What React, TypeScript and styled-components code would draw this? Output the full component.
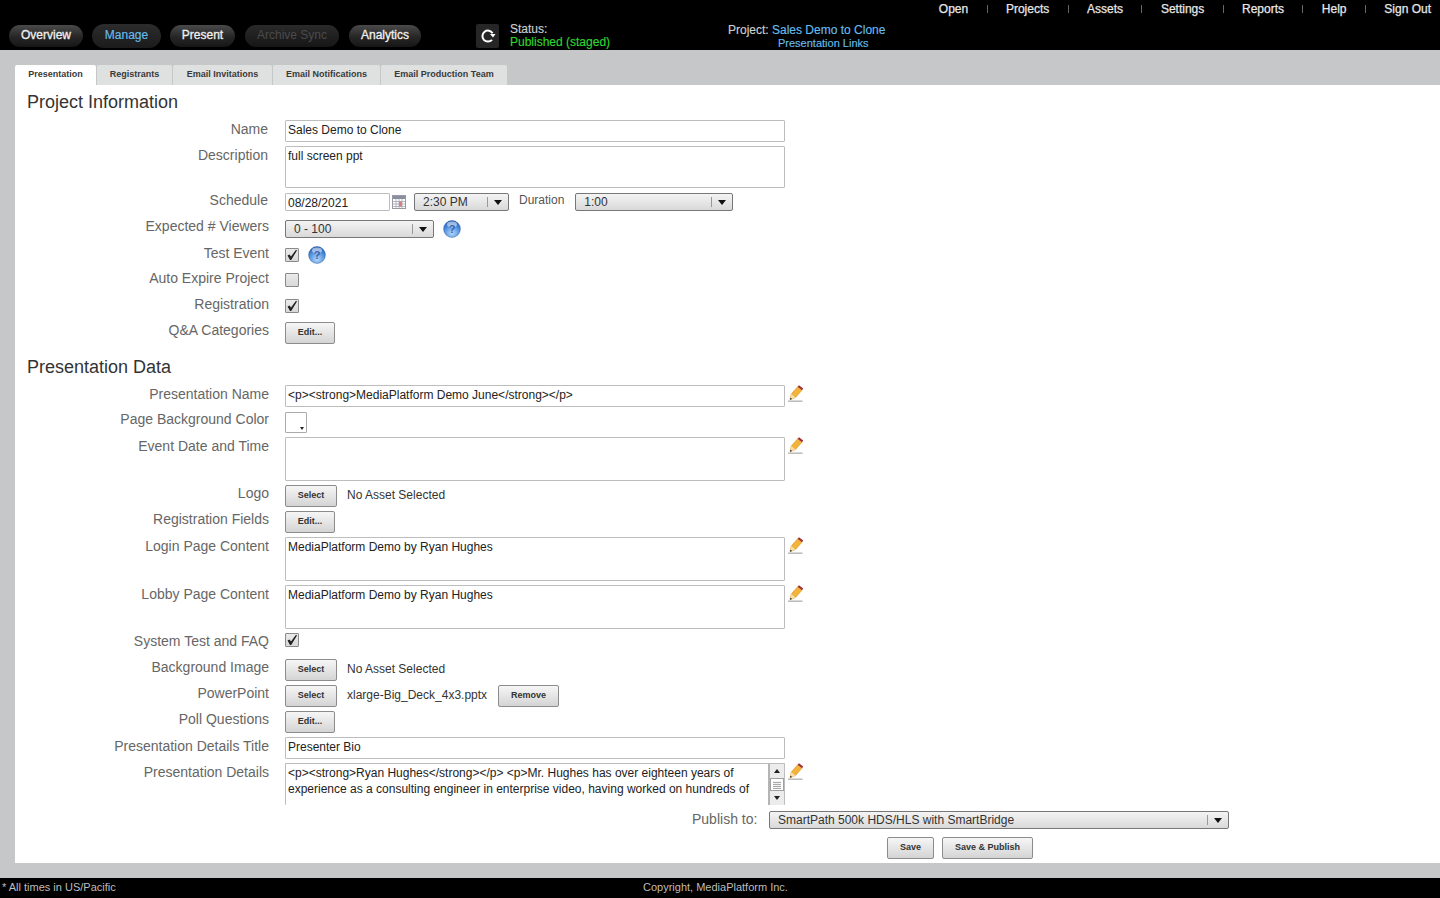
import React from 'react';
import styled, { createGlobalStyle, css } from 'styled-components';

const Global = createGlobalStyle`
  html, body { margin: 0; padding: 0; background: #000; }
  body { font-family: "Liberation Sans", Arial, sans-serif; }
  * { box-sizing: border-box; }
`;

const Page = styled.div`
  width: 1440px;
  height: 898px;
  display: flex;
  flex-direction: column;
  overflow: hidden;
  background: #c6c7c8;
`;

const Header = styled.header`
  height: 50px;
  background: #000;
  flex: none;
  display: flex;
  flex-direction: column;
`;

const TopLinks = styled.nav`
  height: 24px;
  display: flex;
  justify-content: flex-end;
  align-items: flex-start;
  padding: 2px 9px 0 0;
  gap: 18.4px;
  font-size: 12px;
  line-height: 15px;
  color: #e8e8e8;
  -webkit-text-stroke: 0.25px #e8e8e8;
`;

const Sep = styled.span`
  width: 1px;
  height: 8px;
  margin-top: 3px;
  background: #666;
`;

const MainBar = styled.div`
  height: 26px;
  display: flex;
  align-items: flex-start;
  padding-left: 9px;
`;

const Pills = styled.div`
  display: flex;
  width: 467px;
  flex: none;
  padding-top: 1px;
`;

const Pill = styled.a<{ $w: number; $gap: number; $active?: boolean; $off?: boolean }>`
  width: ${p => p.$w}px;
  margin-right: ${p => p.$gap}px;
  height: 22px;
  padding-bottom: 2px;
  border-radius: 11px;
  background: linear-gradient(#4a4a4a, #262626 55%, #161616);
  color: #f0f0f0;
  font-size: 12px;
  -webkit-text-stroke: 0.3px currentColor;
  display: flex;
  align-items: center;
  justify-content: center;
  ${p => p.$active && css`
    height: 24px;
    margin-top: -1px;
    border-radius: 12px;
    background: linear-gradient(#2c2c2c, #1b1b1b);
    color: #66bbec;
    -webkit-text-stroke: 0.15px currentColor;
  `}
  ${p => p.$off && css`
    background: linear-gradient(#2a2a2a, #161616);
    color: #4a4a4a;
    -webkit-text-stroke: 0;
  `}
`;

const Refresh = styled.div`
  width: 23px;
  height: 24px;
  flex: none;
  border-radius: 2px;
  background: #262626;
  display: flex;
  align-items: center;
  justify-content: center;
`;

const Status = styled.div`
  margin-left: 11px;
  margin-top: -1px;
  width: 218px;
  flex: none;
  font-size: 12px;
  line-height: 13px;
  color: #cfcfcf;
  -webkit-text-stroke: 0.15px currentColor;
`;

const Green = styled.div`
  color: #2fd52f;
`;

const ProjectBox = styled.div`
  width: 159px;
  flex: none;
  font-size: 12px;
  line-height: 13px;
  color: #cfcfcf;
  white-space: nowrap;
  -webkit-text-stroke: 0.15px currentColor;
`;

const Blue = styled.span`
  color: #66bbec;
`;

const SubLink = styled.div`
  padding-left: 50px;
  font-size: 11px;
  line-height: 13px;
  color: #66bbec;
`;

const Body = styled.main`
  flex: 1;
  padding: 15px 0 15px 15px;
  display: flex;
  flex-direction: column;
`;

const Tabs = styled.div`
  display: flex;
  gap: 1px;
  height: 20px;
  flex: none;
`;

const Tab = styled.div<{ $w: number; $active?: boolean }>`
  width: ${p => p.$w}px;
  background: ${p => (p.$active ? '#fff' : '#dfe0e0')};
  border-radius: 2px 2px 0 0;
  display: flex;
  align-items: center;
  justify-content: center;
  font-size: 9px;
  font-weight: 700;
  color: #3a3a3a;
  padding-bottom: ${p => (p.$active ? 2 : 3)}px;
`;

const Panel = styled.section`
  flex: 1;
  background: #fff;
  display: flex;
  flex-direction: column;
`;

const SectionTitle = styled.h2<{ $h: number }>`
  margin: 0;
  height: ${p => p.$h}px;
  padding: 7px 0 0 12px;
  font-size: 18px;
  line-height: 20px;
  font-weight: 400;
  color: #333;
`;

const Row = styled.div<{ $h: number }>`
  height: ${p => p.$h}px;
  display: flex;
  align-items: flex-start;
  flex: none;
`;

const Label = styled.label<{ $top?: number; $inset?: boolean }>`
  width: 254px;
  flex: none;
  margin: ${p => p.$top ?? 2}px 16px 0 0;
  padding-right: ${p => (p.$inset ? 1 : 0)}px;
  text-align: right;
  font-size: 14px;
  line-height: 14px;
  color: #666;
`;

const Controls = styled.div<{ $top?: number }>`
  display: flex;
  align-items: flex-start;
  padding-top: ${p => p.$top ?? 0}px;
`;

const TextInput = styled.input`
  width: 500px;
  height: 22px;
  padding: 0 2px 2px;
  border: 1px solid #bdbdbd;
  border-radius: 1px;
  font: 12px "Liberation Sans", Arial, sans-serif;
  color: #222;
  background: #fff;
  outline: none;
`;

const TextArea = styled.textarea<{ $h: number }>`
  width: 500px;
  height: ${p => p.$h}px;
  padding: 2px 2px;
  border: 1px solid #bdbdbd;
  border-radius: 1px;
  font: 12px/15px "Liberation Sans", Arial, sans-serif;
  color: #222;
  resize: none;
  outline: none;
  display: block;
`;

const DateInput = styled(TextInput)`
  width: 105px;
  height: 18px;
  padding: 1px 2px 0;
`;

const Select = styled.div<{ $w: number; $ml?: number }>`
  width: ${p => p.$w}px;
  margin-left: ${p => p.$ml ?? 0}px;
  height: 18px;
  border: 1px solid #777;
  border-radius: 2px;
  background: linear-gradient(#f4f4f4, #d9d9d9);
  display: flex;
  align-items: center;
  padding-left: 8px;
  font-size: 12px;
  color: #333;
`;

const SelectText = styled.span`
  flex: 1;
`;

const Caret = styled.span`
  width: 21px;
  height: 10px;
  padding-right: 1px;
  border-left: 1px solid #999;
  display: flex;
  align-items: center;
  justify-content: center;
  &::after {
    content: '';
    border-left: 4px solid transparent;
    border-right: 4px solid transparent;
    border-top: 5px solid #111;
  }
`;

const InlineLabel = styled.span`
  margin: 0 11px 0 10px;
  font-size: 12px;
  line-height: 15px;
  color: #555;
`;

const Check = styled.span`
  width: 14px;
  height: 14px;
  border: 1px solid #8a8a8a;
  border-radius: 1px;
  background: linear-gradient(#eaeaea, #d8d8d8);
  display: flex;
  align-items: center;
  justify-content: center;
  flex: none;
`;

const Button = styled.button<{ $w: number; $ml?: number }>`
  width: ${p => p.$w}px;
  margin-left: ${p => p.$ml ?? 0}px;
  height: 22px;
  padding: 0 0 2px;
  border: 1px solid #8c8c8c;
  border-radius: 2px;
  background: linear-gradient(#f6f6f6, #d4d4d4);
  font: 700 9px "Liberation Sans", Arial, sans-serif;
  color: #333;
  flex: none;
`;

const AssetText = styled.span`
  margin-left: 10px;
  font-size: 12px;
  line-height: 20px;
  color: #333;
`;

const Swatch = styled.div`
  width: 22px;
  height: 21px;
  position: relative;
  border: 1px solid #aaa;
  border-radius: 1px;
  background: #fff;
  &::after {
    content: '';
    position: absolute;
    right: 2px;
    bottom: 2px;
    border-left: 2px solid transparent;
    border-right: 2px solid transparent;
    border-top: 3px solid #222;
  }
`;

const EditIcon = styled.span`
  width: 16px;
  margin-left: 3px;
  display: block;
  flex: none;
`;

const HelpSlot = styled.span<{ $ml: number; $up?: number }>`
  margin-left: ${p => p.$ml}px;
  margin-top: ${p => -(p.$up ?? 0)}px;
  display: block;
  height: 18px;
  flex: none;
`;

const DetailsBox = styled.div`
  width: 500px;
  height: 42px;
  display: flex;
  border: 1px solid #bdbdbd;
  border-bottom: none;
  border-radius: 1px;
  overflow: hidden;
`;

const DetailsText = styled.div`
  flex: 1;
  padding: 1px 2px;
  font-size: 12px;
  line-height: 16px;
  color: #222;
`;

const Scroll = styled.div`
  width: 16px;
  flex: none;
  display: flex;
  flex-direction: column;
  border-left: 2px solid #b4b4b4;
`;

const ScrollBtn = styled.div<{ $down?: boolean }>`
  height: 14px;
  flex: none;
  background: #ececec;
  display: flex;
  align-items: center;
  justify-content: center;
  &::after {
    content: '';
    border-left: 3.5px solid transparent;
    border-right: 3.5px solid transparent;
    ${p => (p.$down ? 'border-top: 4px solid #222;' : 'border-bottom: 4px solid #222;')}
  }
`;

const ScrollThumb = styled.div`
  height: 13px;
  flex: none;
  border: 1px solid #a0a0a0;
  background: repeating-linear-gradient(#f2f2f2 0 1px, #aaa 1px 2px);
  background-size: 8px 8px;
  background-position: center;
  background-repeat: no-repeat;
`;

const PublishRow = styled.div`
  height: 26px;
  flex: none;
  margin-top: 6px;
  display: flex;
  align-items: flex-start;
  padding-left: 677px;
`;

const PublishLabel = styled.span`
  width: 77px;
  flex: none;
  font-size: 14px;
  line-height: 16px;
  color: #666;
`;

const SaveRow = styled.div`
  display: flex;
  padding-left: 872px;
`;

const Footer = styled.footer`
  height: 20px;
  flex: none;
  background: #000;
  display: grid;
  grid-template-columns: 641px 1fr;
  align-items: center;
  padding: 0 0 2px 2px;
  font-size: 11px;
  color: #bdbdbd;
`;

const Pencil = () => (
  <svg width="16" height="18" viewBox="0 0 16 18">
    <path d="M0 16.200h14.500" stroke="#b5b5b5" strokeWidth="1.400" />
    <path d="M2 14.800 L3.200 9 L9.600 1.800 L14 5.200 L7.500 12.600Z" fill="#f2b33a" stroke="#d08f1e" strokeWidth=".5" />
    <path d="M9.600 1.800 L11 .3 L15.200 3.600 L14 5.200Z" fill="#a52c35" />
    <path d="M3.200 9 L2 14.800 L7.500 12.600 L5.500 11Z" fill="#f6deb2" />
    <path d="M2.400 12.800 L2 14.800 L4.200 14Z" fill="#222" />
  </svg>
);

const Help = ({ id }: { id: string }) => (
  <svg width="18" height="18" viewBox="0 0 18 18">
    <defs>
      <radialGradient id={id} cx=".5" cy=".75" r=".75">
        <stop offset="0" stopColor="#b4d8fa" />
        <stop offset=".55" stopColor="#5a98e2" />
        <stop offset="1" stopColor="#1d58b4" />
      </radialGradient>
    </defs>
    <circle cx="9" cy="9" r="8.400" fill={`url(#${id})`} stroke="#2f62ad" strokeWidth=".5" />
    <ellipse cx="9" cy="4.400" rx="5" ry="2.800" fill="#fff" opacity=".5" />
    <text x="9" y="13" textAnchor="middle" fontSize="11" fontWeight="700" fontFamily="Liberation Sans" fill="#3a63a8">?</text>
  </svg>
);

const Tick = () => (
  <svg width="12" height="12" viewBox="0 0 12 12">
    <path d="M1.500 6.500 L3.500 5.500 L5 7.500 L10 .8 L11 1.500 L5.200 11 L4 11Z" fill="#222" />
  </svg>
);

const Calendar = () => (
  <svg width="14" height="14" viewBox="0 0 14 14" style={{ marginLeft: 2, marginTop: 2 }}>
    <rect x=".5" y=".5" width="13" height="13" fill="#fff" stroke="#9a9aa5" />
    <rect x="1" y="1" width="12" height="3" fill="#8a8f9f" />
    <path d="M1 6.500h12M1 9h12M1 11.500h12M4 4v9M7 4v9M10 4v9" stroke="#a5a5b5" strokeWidth=".8" />
    <rect x="7" y="6.500" width="3" height="5" fill="#d88080" />
  </svg>
);

const RefreshIcon = () => (
  <svg width="16" height="16" viewBox="0 0 16 16" fill="none">
    <path d="M12 11.800 A5.500 5.500 0 1 1 12.600 5.200" stroke="#fff" strokeWidth="2" />
    <path d="M10 6 L15.500 6 L13 9.500Z" fill="#fff" />
  </svg>
);

const links = ['Open', 'Projects', 'Assets', 'Settings', 'Reports', 'Help', 'Sign Out'];
const noop = () => undefined;

export default function App() {
  return (
    <Page>
      <Global />
      <Header>
        <TopLinks>
          {links.map((l, i) => (
            <React.Fragment key={l}>
              {i > 0 && <Sep />}
              <span>{l}</span>
            </React.Fragment>
          ))}
        </TopLinks>
        <MainBar>
          <Pills>
            <Pill $w={74} $gap={9}>Overview</Pill>
            <Pill $w={69} $gap={9} $active>Manage</Pill>
            <Pill $w={65} $gap={10}>Present</Pill>
            <Pill $w={94} $gap={10} $off>Archive Sync</Pill>
            <Pill $w={72} $gap={0}>Analytics</Pill>
          </Pills>
          <Refresh><RefreshIcon /></Refresh>
          <Status>
            Status:
            <Green>Published (staged)</Green>
          </Status>
          <ProjectBox>
            Project: <Blue>Sales Demo to Clone</Blue>
            <SubLink>Presentation Links</SubLink>
          </ProjectBox>
        </MainBar>
      </Header>

      <Body>
        <Tabs>
          <Tab $w={81} $active>Presentation</Tab>
          <Tab $w={75}>Registrants</Tab>
          <Tab $w={99}>Email Invitations</Tab>
          <Tab $w={107}>Email Notifications</Tab>
          <Tab $w={126}>Email Production Team</Tab>
        </Tabs>
        <Panel>
          <SectionTitle $h={35}>Project Information</SectionTitle>
          <Row $h={26}>
            <Label $inset>Name</Label>
            <Controls><TextInput value="Sales Demo to Clone" onChange={noop} /></Controls>
          </Row>
          <Row $h={47}>
            <Label $inset>Description</Label>
            <Controls><TextArea $h={42} value="full screen ppt" onChange={noop} /></Controls>
          </Row>
          <Row $h={27}>
            <Label $top={0} $inset>Schedule</Label>
            <Controls>
              <DateInput value="08/28/2021" onChange={noop} />
              <Calendar />
              <Select $w={95} $ml={8}><SelectText>2:30 PM</SelectText><Caret /></Select>
              <InlineLabel>Duration</InlineLabel>
              <Select $w={158}><SelectText>1:00</SelectText><Caret /></Select>
            </Controls>
          </Row>
          <Row $h={26}>
            <Label $top={-1}>Expected # Viewers</Label>
            <Controls>
              <Select $w={149}><SelectText>0 - 100</SelectText><Caret /></Select>
              <HelpSlot $ml={9}><Help id="help-a" /></HelpSlot>
            </Controls>
          </Row>
          <Row $h={26}>
            <Label $top={0}>Test Event</Label>
            <Controls $top={2}>
              <Check><Tick /></Check>
              <HelpSlot $ml={9} $up={2}><Help id="help-b" /></HelpSlot>
            </Controls>
          </Row>
          <Row $h={26}>
            <Label $top={-1}>Auto Expire Project</Label>
            <Controls $top={1}><Check /></Controls>
          </Row>
          <Row $h={24}>
            <Label $top={-1}>Registration</Label>
            <Controls $top={1}><Check><Tick /></Check></Controls>
          </Row>
          <Row $h={28}>
            <Label $top={1}>Q&amp;A Categories</Label>
            <Controls><Button $w={50}>Edit...</Button></Controls>
          </Row>
          <SectionTitle $h={35}>Presentation Data</SectionTitle>
          <Row $h={27}>
            <Label>Presentation Name</Label>
            <Controls>
              <TextInput value="<p><strong>MediaPlatform Demo June</strong></p>" onChange={noop} />
              <EditIcon><Pencil /></EditIcon>
            </Controls>
          </Row>
          <Row $h={25}>
            <Label $top={0}>Page Background Color</Label>
            <Controls><Swatch /></Controls>
          </Row>
          <Row $h={48}>
            <Label $top={2}>Event Date and Time</Label>
            <Controls>
              <TextArea $h={44} value="" onChange={noop} />
              <EditIcon><Pencil /></EditIcon>
            </Controls>
          </Row>
          <Row $h={26}>
            <Label $top={1}>Logo</Label>
            <Controls>
              <Button $w={52}>Select</Button>
              <AssetText>No Asset Selected</AssetText>
            </Controls>
          </Row>
          <Row $h={26}>
            <Label $top={1}>Registration Fields</Label>
            <Controls><Button $w={50}>Edit...</Button></Controls>
          </Row>
          <Row $h={48}>
            <Label $top={2}>Login Page Content</Label>
            <Controls>
              <TextArea $h={44} value="MediaPlatform Demo by Ryan Hughes" onChange={noop} />
              <EditIcon><Pencil /></EditIcon>
            </Controls>
          </Row>
          <Row $h={48}>
            <Label $top={2}>Lobby Page Content</Label>
            <Controls>
              <TextArea $h={44} value="MediaPlatform Demo by Ryan Hughes" onChange={noop} />
              <EditIcon><Pencil /></EditIcon>
            </Controls>
          </Row>
          <Row $h={26}>
            <Label $top={1}>System Test and FAQ</Label>
            <Controls><Check><Tick /></Check></Controls>
          </Row>
          <Row $h={26}>
            <Label $top={1}>Background Image</Label>
            <Controls>
              <Button $w={52}>Select</Button>
              <AssetText>No Asset Selected</AssetText>
            </Controls>
          </Row>
          <Row $h={26}>
            <Label $top={1}>PowerPoint</Label>
            <Controls>
              <Button $w={52}>Select</Button>
              <AssetText>xlarge-Big_Deck_4x3.pptx</AssetText>
              <Button $w={61} $ml={11}>Remove</Button>
            </Controls>
          </Row>
          <Row $h={26}>
            <Label $top={1}>Poll Questions</Label>
            <Controls><Button $w={50}>Edit...</Button></Controls>
          </Row>
          <Row $h={26}>
            <Label $top={2}>Presentation Details Title</Label>
            <Controls><TextInput value="Presenter Bio" onChange={noop} /></Controls>
          </Row>
          <Row $h={42}>
            <Label $top={2}>Presentation Details</Label>
            <Controls>
              <DetailsBox>
                <DetailsText>
                  &lt;p&gt;&lt;strong&gt;Ryan Hughes&lt;/strong&gt;&lt;/p&gt; &lt;p&gt;Mr. Hughes has over eighteen years of experience as a consulting engineer in enterprise video, having worked on hundreds of
                </DetailsText>
                <Scroll>
                  <ScrollBtn />
                  <ScrollThumb />
                  <ScrollBtn $down />
                </Scroll>
              </DetailsBox>
              <EditIcon><Pencil /></EditIcon>
            </Controls>
          </Row>
          <PublishRow>
            <PublishLabel>Publish to:</PublishLabel>
            <Select $w={460}><SelectText>SmartPath 500k HDS/HLS with SmartBridge</SelectText><Caret /></Select>
          </PublishRow>
          <SaveRow>
            <Button $w={47}>Save</Button>
            <Button $w={91} $ml={8}>Save &amp; Publish</Button>
          </SaveRow>
        </Panel>
      </Body>

      <Footer>
        <span>* All times in US/Pacific</span>
        <span>Copyright, MediaPlatform Inc.</span>
      </Footer>
    </Page>
  );
}
